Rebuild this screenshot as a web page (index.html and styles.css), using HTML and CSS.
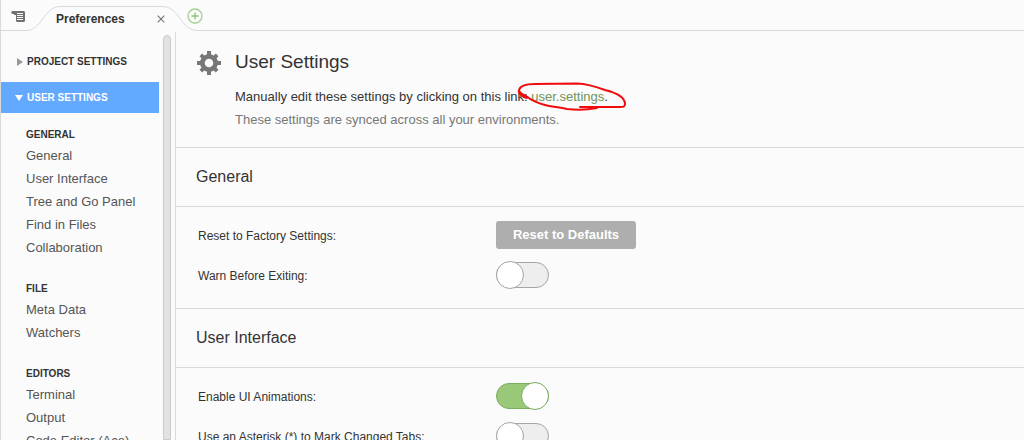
FILE: index.html
```html
<!DOCTYPE html>
<html lang="en">
<head>
<meta charset="utf-8">
<title>Preferences</title>
<link rel="stylesheet" href="styles.css">
</head>
<body>
<div class="app">
  <header class="tabbar">
    <button class="icon-button menu-button" type="button" aria-label="Tab menu">
      <svg width="15" height="12" viewBox="0 0 15 12"><path d="M1.500 0H12.500Q14 0 14 1.500V9.500Q14 11 12.500 11H6.500Q5 11 5 9.500V4H3V3H2Q.3 3 .3 1.500Q.3 0 1.500 0Z" fill="#707070"/><path d="M6 2.500H12M6 4.500H12M6 6.500H12M6 8.500H12" stroke="#fbfbfb" stroke-width="1"/></svg>
    </button>
    <div class="tab">
      <svg class="tab-shape" width="172" height="26" viewBox="0 0 172 26" aria-hidden="true"><path d="M0 24.500C16 24.500 18 .5 34 .5H136C154 .5 154 24.500 172 24.500V26H0Z" fill="#fbfbfb"/><path d="M0 24.500C16 24.500 18 .5 34 .5H136C154 .5 154 24.500 172 24.500" fill="none" stroke="#dadada"/></svg>
      <span class="tab-title">Preferences</span>
      <button class="icon-button tab-close" type="button" aria-label="Close tab">
        <svg width="8" height="8" viewBox="0 0 8 8"><path d="M.7 .7L7.300 7.300M7.300 .7L.7 7.300" stroke="#777" stroke-width="1.200"/></svg>
      </button>
    </div>
    <button class="icon-button add-button" type="button" aria-label="New tab">
      <svg width="16" height="16" viewBox="0 0 16 16" fill="none" stroke="#a5cf90" stroke-width="1.300"><circle cx="8" cy="8" r="7"/><path d="M8 4.500V11.500M4.500 8H11.500" stroke="#8fc175"/></svg>
    </button>
  </header>
  <div class="body">
    <nav class="sidebar">
      <div class="nav-scroll">
        <button class="group" type="button"><svg width="6" height="8" viewBox="0 0 6 8"><path d="M0 0L6 4L0 8Z" fill="#999"/></svg>PROJECT SETTINGS</button>
        <button class="group selected" type="button"><svg width="8" height="6" viewBox="0 0 8 6"><path d="M0 0H8L4 6Z" fill="#fff"/></svg>USER SETTINGS</button>
        <section class="nav-section">
          <h2>GENERAL</h2>
          <a href="#general">General</a>
          <a href="#ui">User Interface</a>
          <a href="#tree">Tree and Go Panel</a>
          <a href="#find">Find in Files</a>
          <a href="#collab">Collaboration</a>
        </section>
        <section class="nav-section">
          <h2>FILE</h2>
          <a href="#meta">Meta Data</a>
          <a href="#watchers">Watchers</a>
        </section>
        <section class="nav-section">
          <h2>EDITORS</h2>
          <a href="#terminal">Terminal</a>
          <a href="#output">Output</a>
          <a href="#code">Code Editor (Ace)</a>
        </section>
      </div>
      <div class="scrollbar"></div>
    </nav>
    <main class="content">
      <div class="intro">
        <svg class="gear" width="24" height="24" viewBox="-12 -12 24 24" aria-hidden="true">
          <g fill="#777"><path fill-rule="evenodd" d="M-9 0A9 9 0 1 0 9 0A9 9 0 1 0-9 0ZM-4.300 0A4.300 4.300 0 1 1 4.300 0A4.300 4.300 0 1 1-4.300 0Z"/>
          <path id="teeth" d="M-2-12H2V-8H-2ZM-2 8H2V12H-2ZM-12-2H-8V2H-12ZM8-2H12V2H8Z"/><use href="#teeth" transform="rotate(45) scale(.96)"/></g>
        </svg>
        <div class="intro-text">
          <h1>User Settings</h1>
          <p>Manually edit these settings by clicking on this link: <span class="marked"><a class="file-link" href="#user.settings">user.settings</a>.<svg class="marker" width="110" height="30" viewBox="0 0 110 30" aria-hidden="true"><path d="M10 16C5 15 1 11 2 8C3 4 10 2 18 2L60 1.500C72 2 80 5 88 8C100 11 108 16 108 22C108 25 106 25 103 25L63 25M80 26C70 28 58 28 50 27C42 25 34 25 28 23C20 21 14 18 9 14C5 12 2 11 2 8" fill="none" stroke="#f00c0c" stroke-width="2" stroke-linecap="round"/></svg></span></p>
          <p class="muted">These settings are synced across all your environments.</p>
        </div>
      </div>
      <h2 class="heading" id="general">General</h2>
      <div class="rows">
        <div class="row"><span class="label">Reset to Factory Settings:</span><button class="reset" type="button">Reset to Defaults</button></div>
        <div class="row"><label class="label" for="warn">Warn Before Exiting:</label><input class="switch" id="warn" type="checkbox"></div>
      </div>
      <h2 class="heading" id="ui">User Interface</h2>
      <div class="rows">
        <div class="row"><label class="label" for="anim">Enable UI Animations:</label><input class="switch" id="anim" type="checkbox" checked></div>
        <div class="row"><label class="label" for="star">Use an Asterisk (*) to Mark Changed Tabs:</label><input class="switch" id="star" type="checkbox"></div>
      </div>
    </main>
  </div>
</div>
</body>
</html>
```
FILE: styles.css
```css
*, *::before { box-sizing: border-box; }
body {
  margin: 0;
  background: #fbfbfb;
  color: #333;
  font-family: "Liberation Sans", Arial, sans-serif;
  font-size: 13px;
}
h1, h2, p { margin: 0; font-weight: normal; }
button { border: 0; font-family: inherit; }
svg { display: block; flex: none; }
.app {
  display: flex;
  flex-direction: column;
  height: 100vh;
  overflow: hidden;
  border-left: 1px solid #dadada;
}
.tabbar {
  display: flex;
  flex: none;
  height: 31px;
  border-bottom: 1px solid #dadada;
}
.icon-button { padding: 0; background: none; }
.menu-button { padding: 3px 0 0 10px; width: 25px; }
.tab {
  position: relative;
  display: flex;
  align-items: center;
  justify-content: space-between;
  width: 161px;
  height: 31px;
  padding: 7px 22px 0 30px;
}
.tab-shape { position: absolute; left: 0; top: 6px; }
.tab-title { position: relative; font-size: 12px; font-weight: bold; }
.tab-close { position: relative; }
.add-button { position: relative; padding-top: 2px; }
.body { display: flex; flex: 1; min-height: 0; }
.sidebar {
  display: flex;
  justify-content: space-between;
  flex: none;
  width: 175px;
  padding-right: 4px;
  border-right: 1px solid #dadada;
}
.nav-scroll { width: 158px; padding-top: 15px; }
.scrollbar {
  width: 8px;
  margin-top: 4px;
  border: 1px solid #cacaca;
  border-radius: 4px 4px 0 0;
  background: #e2e2e2;
}
.group {
  display: flex;
  align-items: center;
  gap: 4px;
  width: 100%;
  height: 31px;
  margin-bottom: 5px;
  padding: 0 0 0 16px;
  background: none;
  color: #333;
  font-size: 10px;
  font-weight: bold;
}
.group.selected { margin: 0; padding-left: 14px; background: #63a9ff; color: #fff; }
.nav-section { padding: 13px 0 0 25px; margin-bottom: 8px; }
.nav-section h2 { font-size: 10px; font-weight: bold; line-height: 18px; }
.nav-section a {
  display: block;
  color: #555;
  line-height: 23px;
  text-decoration: none;
  white-space: nowrap;
}
.content { flex: 1; overflow: hidden; }
.intro {
  display: flex;
  gap: 14px;
  height: 117px;
  padding: 19px 20px 0 21px;
  border-bottom: 1px solid #dadada;
}
.gear { margin-top: 1px; }
.intro p { line-height: 23px; }
.intro h1 { margin-bottom: 11px; font-size: 19px; line-height: 24px; }
.intro .muted { color: #777; }
.file-link { color: #72945a; text-decoration: none; }
.marked { position: relative; }
.marker { position: absolute; left: -14px; top: -7px; }
.heading {
  height: 59px;
  padding-left: 20px;
  border-bottom: 1px solid #dadada;
  font-size: 16px;
  line-height: 58px;
}
.rows { padding: 8px 22px 13px; border-bottom: 1px solid #dadada; }
.row { display: flex; align-items: center; height: 40px; }
.label { width: 298px; padding-top: 2px; font-size: 12px; }
.reset {
  width: 140px;
  height: 28px;
  padding: 0 0 2px;
  border-radius: 3px;
  background: #aeaeae;
  color: #fff;
  font-size: 13px;
  font-weight: bold;
}
.switch {
  display: flex;
  align-items: center;
  appearance: none;
  width: 53px;
  height: 26px;
  margin: 0;
  border: 1px solid #a5a5a5;
  border-radius: 13px;
  background: #eee;
}
.switch::before {
  content: "";
  flex: none;
  width: 28px;
  height: 28px;
  margin: 0 -1px;
  border: 1px solid #a5a5a5;
  border-radius: 50%;
  background: #fff;
}
.switch:checked { justify-content: flex-end; border-color: #7bab5d; background: #99c879; }
.switch:checked::before { border-color: #7bab5d; }
```
